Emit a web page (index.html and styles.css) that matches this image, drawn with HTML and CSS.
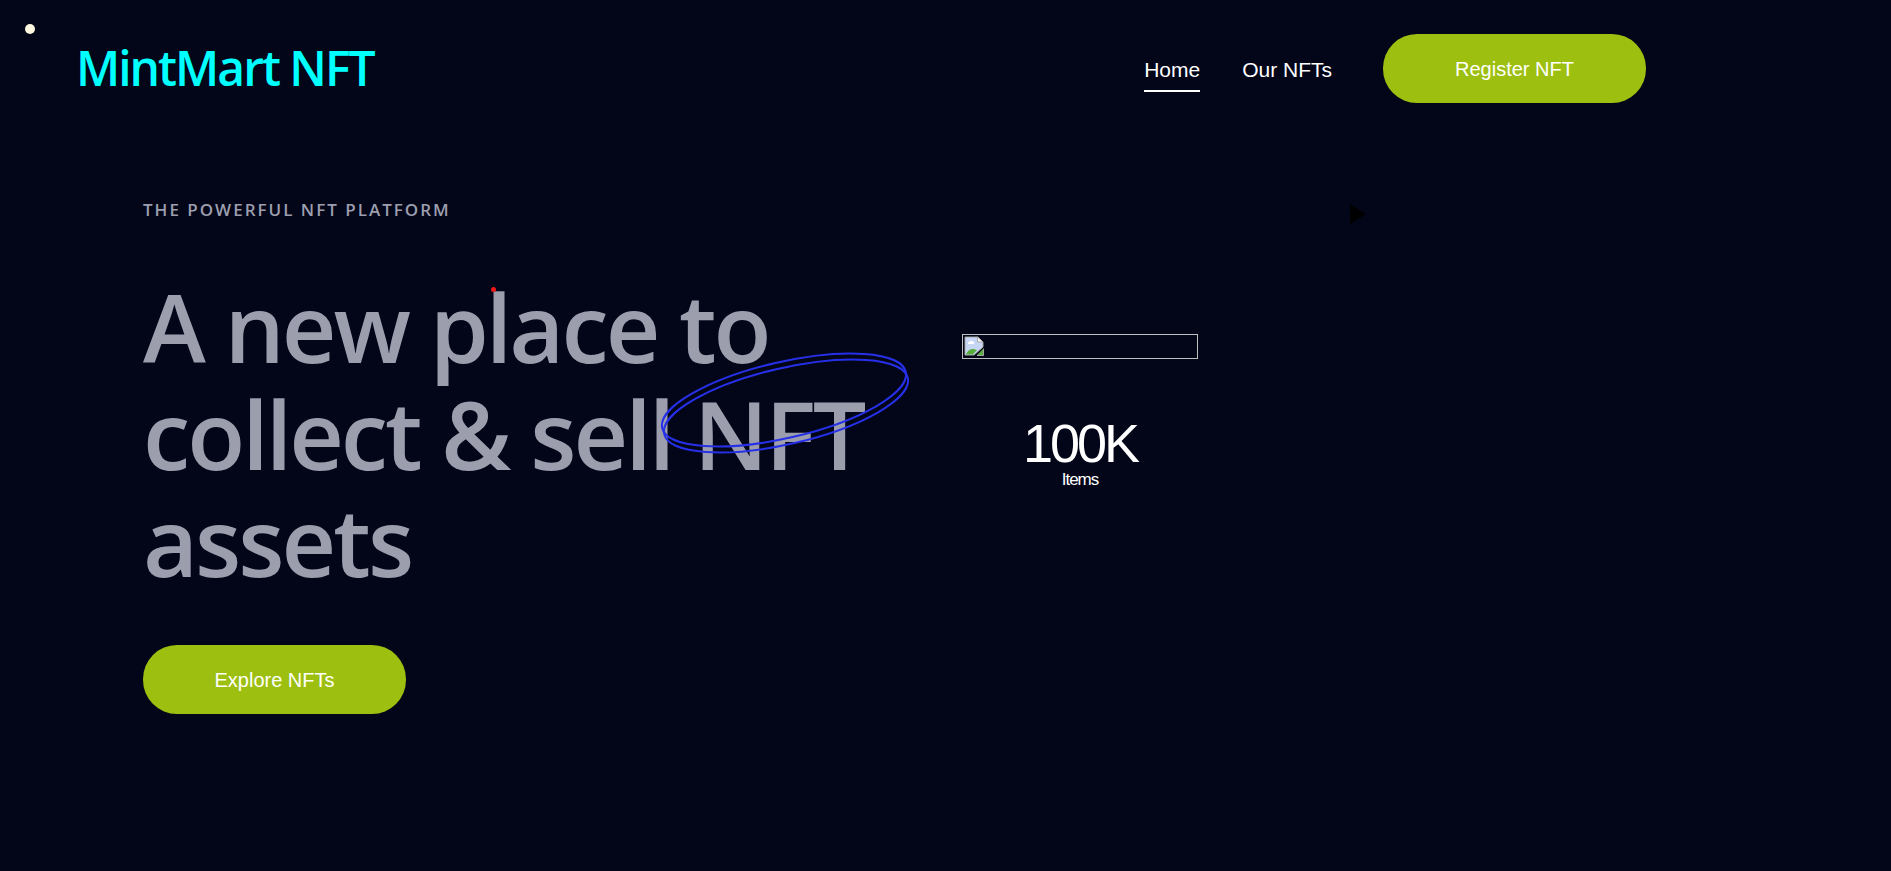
FILE: index.html
```html
<!DOCTYPE html>
<html lang="en">
<head>
<meta charset="utf-8">
<meta name="viewport" content="width=device-width, initial-scale=1">
<title>MintMart NFT</title>
<link rel="stylesheet" href="styles.css">
</head>
<body>
<span class="cursor-dot"></span>
<header class="header">
  <a class="logo" href="#">MintMart NFT</a>
  <nav class="nav">
    <a class="nav-link active" href="#">Home</a>
    <a class="nav-link" href="#">Our NFTs</a>
    <button class="button" type="button">Register NFT</button>
  </nav>
</header>
<main class="hero">
  <section class="intro">
    <p class="eyebrow">The powerful NFT platform</p>
    <h1 class="title">A new place to<br>collect &amp; sell <span class="circled">NFT<svg class="rings" viewBox="0 0 256 112" aria-hidden="true"><g fill="none" stroke="#2630e8" stroke-width="2"><ellipse cx="127" cy="53" rx="125" ry="38" transform="rotate(-13 127 53)"/><ellipse cx="129" cy="59" rx="125" ry="38" transform="rotate(-13 129 59)"/></g></svg></span><br>assets<span class="red-dot"></span></h1>
    <button class="button" type="button">Explore NFTs</button>
  </section>
  <section class="stats">
    <div class="picture" role="img" aria-label="NFT preview">
      <svg class="broken" viewBox="0 0 20 20" aria-hidden="true"><path d="M1 1H14L19 6V11L10 19H1Z" fill="#c6d6f5" stroke="#a5a5a5"/><path d="M4 7.500a2 2 0 0 1 2-2a2.500 2.500 0 0 1 4 1a1.300 1.300 0 0 1 0 1.500H4Z" fill="#fff"/><path d="M2 18.500C3 15 6 13 9 13C11 13 12 14 13 14L9 18.500Z" fill="#5aad3c"/><path d="M13.500 1V6H19Z" fill="#fff" stroke="#a5a5a5"/><path d="M13 19L20 12V19Z" fill="#5aad3c"/><path d="M13 19.500H19.500V13" fill="none" stroke="#a5a5a5"/></svg>
    </div>
    <p class="count">100K</p>
    <p class="label">Items</p>
  </section>
  <svg class="play" viewBox="0 0 16 20" aria-hidden="true"><path d="M0 0L16 10L0 20Z"/></svg>
</main>
</body>
</html>
```
FILE: styles.css
```css
* { box-sizing: border-box; }
body {
  margin: 0;
  min-height: 100vh;
  background: #030619;
  color: #fff;
  font-family: "Liberation Sans", Arial, sans-serif;
}
p, h1 { margin: 0; }
.cursor-dot {
  position: absolute;
  left: 25px;
  top: 24px;
  width: 10px;
  height: 10px;
  border-radius: 50%;
  background: #fff8e1;
}
.header {
  display: flex;
  align-items: center;
  justify-content: space-between;
  padding: 34px 245px 0 76px;
}
.logo {
  padding-bottom: 2px;
  color: #0ff;
  font: 600 48px/66px "Open Sans", "Noto Sans", sans-serif;
  letter-spacing: -2px;
  text-decoration: none;
}
.nav { display: flex; align-items: center; gap: 42px; }
.nav-link {
  padding: 11px 0 6px;
  border-bottom: 2px solid transparent;
  color: #fff;
  font-size: 21px;
  line-height: 28px;
  text-decoration: none;
}
.nav-link.active { border-color: #fff; }
.nav .button { margin-left: 9px; }
.button {
  min-width: 263px;
  height: 69px;
  padding: 2px 48px 0;
  border: 0;
  border-radius: 34px;
  background: #9dbf10;
  color: #fff;
  font: 20px "Liberation Sans", Arial, sans-serif;
}
.hero {
  display: flex;
  align-items: flex-start;
  padding: 95px 143px 40px;
}
.intro { flex: 0 0 819px; color: #9c9eae; }
.eyebrow {
  font: 600 17px/24px "Open Sans", "Noto Sans", sans-serif;
  letter-spacing: 2px;
  text-transform: uppercase;
}
.title {
  position: relative;
  margin: 51px 0;
  font: 600 95px/107px "Open Sans", "Noto Sans", sans-serif;
  letter-spacing: -3px;
  white-space: nowrap;
}
.circled { position: relative; }
.rings {
  position: absolute;
  left: -37px;
  top: -21px;
  width: 256px;
  height: 112px;
}
.red-dot {
  position: absolute;
  left: 348px;
  top: 14px;
  width: 5px;
  height: 5px;
  border-radius: 50%;
  background: #f01818;
}
.stats { width: 236px; padding-top: 136px; text-align: center; }
.picture {
  height: 25px;
  padding: 1px;
  border: 1px solid #c0c0c0;
  text-align: left;
}
.broken { display: block; width: 20px; height: 20px; }
.count { margin-top: 56px; font-size: 54px; line-height: 56px; letter-spacing: -3px; }
.label { font-size: 17px; line-height: 18px; letter-spacing: -1px; }
.play { width: 16px; height: 20px; margin: 6px 0 0 152px; fill: #000; }
```
